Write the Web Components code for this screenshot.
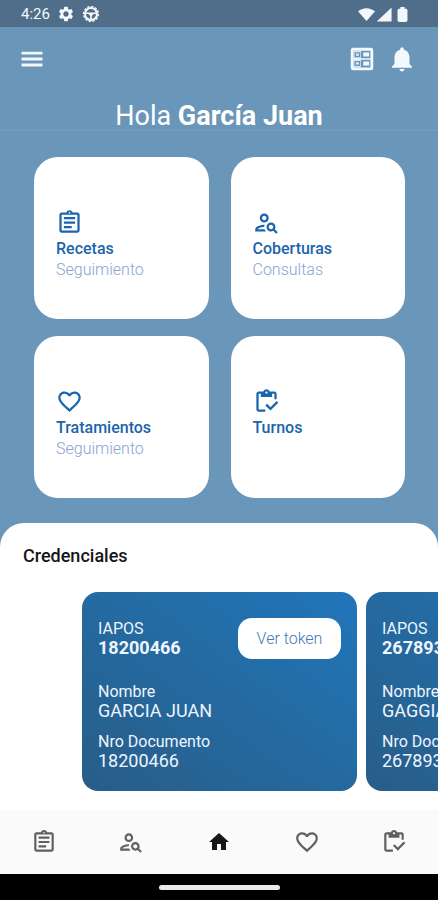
<!DOCTYPE html>
<html lang="es">
<head>
<meta charset="utf-8">
<meta name="viewport" content="width=device-width, initial-scale=1">
<title>Inicio</title>
<style>
html, body { margin: 0; min-height: 100%; }
body { font-family: Roboto, "Liberation Sans", sans-serif; background: #6a96b9; }
</style>
</head>
<body>
<health-app></health-app>
<script>
const ICONS = {
  menu: '<path d="M3 18.4h18v-2.5H3zm0-5.1h18v-2.5H3zM3 5.7v2.5h18V5.7z"/>',
  ballot: '<path fill-rule="evenodd" d="M5 3h14a2 2 0 0 1 2 2v14a2 2 0 0 1-2 2H5a2 2 0 0 1-2-2V5a2 2 0 0 1 2-2zm.3 2.3v13.4h13.4V5.3z"/><path opacity=".8" fill-rule="evenodd" d="M5.300 5.300H11.200v13.400H5.300zM6 6.500v4h4.600v-4zM6 13.500v4h4.600v-4z"/><path d="M7.300 7.600h2v1.800h-2zM7.300 14.600h2v1.800h-2zM5 11.400h14v1.200H5zM13 6.800h4.700v3.200H13zM13 14h4.700v3.200H13z"/>',
  bell: '<path d="M12 22c1.100 0 2-.9 2-2h-4c0 1.100.89 2 2 2zm6-6v-5c0-3.070-1.640-5.640-4.500-6.320V4c0-.83-.67-1.500-1.500-1.500s-1.500.67-1.500 1.500v.68C7.630 5.360 6 7.920 6 11v5l-2 2v1h16v-1z"/>',
  clipboard: '<path d="M7 15h7v2H7zm0-4h10v2H7zm0-4h10v2H7zm12-4h-4.180C14.400 1.840 13.300 1 12 1c-1.300 0-2.400.84-2.820 2H5c-1.100 0-2 .9-2 2v14c0 1.100.9 2 2 2h14c1.100 0 2-.9 2-2V5c0-1.100-.9-2-2-2zm-7-.25c.41 0 .75.34.75.75s-.34.75-.75.75-.75-.34-.75-.75.34-.75.75-.75zM19 19H5V5h14v14z"/>',
  search: '<path d="M10 12c2.210 0 4-1.790 4-4s-1.790-4-4-4-4 1.790-4 4 1.790 4 4 4zm0-6c1.100 0 2 .9 2 2s-.9 2-2 2-2-.9-2-2 .9-2 2-2zM4 18c.22-.72 3.310-2 6-2 0-.7.13-1.370.35-1.990C7.620 13.910 2 15.270 2 18v2h9.540c-.52-.58-.93-1.250-1.190-2H4zM19.430 18.020c.36-.59.57-1.280.57-2.020 0-2.210-1.790-4-4-4s-4 1.790-4 4 1.790 4 4 4c.74 0 1.430-.22 2.020-.57L20.590 22 22 20.590l-2.570-2.570zM16 18c-1.100 0-2-.9-2-2s.9-2 2-2 2 .9 2 2-.9 2-2 2z"/>',
  heart: '<path d="M16.500 3c-1.740 0-3.410.81-4.500 2.090C10.910 3.810 9.240 3 7.500 3 4.420 3 2 5.420 2 8.500c0 3.780 3.400 6.860 8.550 11.540L12 21.350l1.450-1.320C18.600 15.360 22 12.280 22 8.500 22 5.420 19.580 3 16.500 3zm-4.400 15.550l-.1.1-.1-.1C7.140 14.240 4 11.390 4 8.500 4 6.500 5.500 5 7.500 5c1.540 0 3.040.99 3.570 2.360h1.870C13.460 5.990 14.960 5 16.500 5c2 0 3.500 1.500 3.500 3.500 0 2.890-3.140 5.740-7.900 10.050z"/>',
  check: '<path d="M5 5h2v3h10V5h2v5h2V5c0-1.100-.9-2-2-2h-4.180C14.400 1.840 13.300 1 12 1s-2.400.84-2.820 2H5c-1.100 0-2 .9-2 2v14c0 1.100.9 2 2 2h6v-2H5zm7-2c.55 0 1 .45 1 1s-.45 1-1 1-1-.45-1-1 .45-1 1-1zM21 11.500 15.510 17l-3.010-3L11 15.500l4.510 4.500L22.500 13z"/>',
  home: '<path d="M10 20v-6h4v6h5v-8h3L12 3 2 12h3v8z"/>',
  gear: '<path d="M19.140 12.940c.04-.3.060-.61.060-.94 0-.32-.020-.64-.070-.94l2.030-1.580c.18-.14.23-.41.12-.61l-1.920-3.320c-.12-.22-.37-.29-.59-.22l-2.390.96c-.5-.38-1.030-.7-1.620-.94l-.36-2.540c-.04-.24-.24-.41-.48-.41h-3.840c-.24 0-.43.17-.47.41l-.36 2.540c-.59.24-1.130.57-1.620.94l-2.390-.96c-.22-.08-.47 0-.59.22L2.740 8.870c-.12.21-.08.47.12.61l2.030 1.580c-.05.3-.09.63-.09.94s.02.64.07.94l-2.030 1.580c-.18.14-.23.41-.12.61l1.920 3.320c.12.22.37.29.59.22l2.390-.96c.5.38 1.030.7 1.620.94l.36 2.540c.05.24.24.41.48.41h3.840c.24 0 .44-.17.47-.41l.36-2.540c.59-.24 1.130-.56 1.620-.94l2.390.96c.22.08.47 0 .59-.22l1.920-3.320c.12-.22.07-.47-.12-.61zM12 15.600c-1.980 0-3.600-1.620-3.600-3.600s1.620-3.600 3.600-3.600 3.600 1.620 3.600 3.600-1.620 3.600-3.600 3.600z"/>',
  wheel: '<g fill="none" stroke="currentColor"><circle cx="12" cy="12" r="8" stroke-width="2.600"/><circle cx="12" cy="12" r="9.800" stroke-width="2" stroke-dasharray="3.200 1.900"/><path stroke-width="2.200" d="M4 11h16M12 12v8M9 11l3 3 3-3"/></g>',
  wifi: '<path d="M12 21 0 7.500C3 4.800 7.300 3 12 3s9 1.800 12 4.500z"/>',
  signal: '<path d="M1 22h21V2z"/>',
  battery: '<path d="M16.500 4H15V1.500H9V4H7.500C6 4 5 5 5 6.300v13.900C5 21.500 6 22.500 7.500 22.500h9c1.500 0 2.500-1 2.500-2.300V6.300C19 5 18 4 16.500 4z"/>'
};

class Component extends HTMLElement {
  connectedCallback() {
    if (this.shadowRoot) return;
    this.attachShadow({ mode: "open" }).innerHTML =
      `<style>*{box-sizing:border-box}${this.css()}</style>${this.html()}`;
  }
}

customElements.define("app-icon", class extends Component {
  css() { return `:host{display:block;flex:none;width:var(--size,24px);height:var(--size,24px)}svg{display:block;width:100%;height:100%;fill:currentColor}`; }
  html() { return `<svg viewBox="0 0 24 24" aria-hidden="true">${ICONS[this.getAttribute("name")]}</svg>`; }
});

customElements.define("status-bar", class extends Component {
  css() { return `
    :host{display:flex;align-items:center;justify-content:space-between;height:27px;padding:1px 27px 0 21px;background:#506e89;color:#f4f8fc;font-size:15px;line-height:18px}
    .group{display:flex;align-items:center;gap:7px;--size:18px}
    .right{gap:1px;--size:17px}`; }
  html() { return `<div class="group"><time>4:26</time><app-icon name="gear"></app-icon><app-icon name="wheel"></app-icon></div>
    <div class="group right"><app-icon name="wifi"></app-icon><app-icon name="signal"></app-icon><app-icon name="battery"></app-icon></div>`; }
});

customElements.define("app-header", class extends Component {
  css() { return `
    :host{display:block;color:#fff}
    .bar{display:flex;align-items:center;height:62px;padding:1px 21px 0 18px;gap:10px}
    button{border:0;padding:0;background:none;color:#f2f8ff;font:inherit}
    .menu{margin-right:auto;--size:28px}
    .action{--size:30px}
    h1{margin:0;padding:11px 0 0;height:42px;border-bottom:1px solid #76a0c1;text-align:center;font-size:27px;line-height:32px;font-weight:400}
    b{font-weight:700}`; }
  html() { return `<div class="bar"><button class="menu" aria-label="Menú"><app-icon name="menu"></app-icon></button>
    <button class="action" aria-label="Formularios"><app-icon name="ballot"></app-icon></button>
    <button class="action" aria-label="Notificaciones"><app-icon name="bell"></app-icon></button></div>
    <h1><slot></slot></h1>`; }
});

customElements.define("menu-tile", class extends Component {
  css() { return `
    :host{display:block}
    a{display:flex;flex-direction:column;align-items:flex-start;height:162px;padding:52px 22px 0;border-radius:24px;background:#fff;color:#1a65ab;text-decoration:none;font-size:16px;line-height:21px}
    app-icon{--size:27px;margin-bottom:2px}
    strong{font-weight:500}
    span{color:#86a6d0;font-weight:300}`; }
  html() { return `<a href="#"><app-icon name="${this.getAttribute("icon")}"></app-icon><strong><slot></slot></strong><span><slot name="detail"></slot></span></a>`; }
});

customElements.define("credential-card", class extends Component {
  css() { return `
    :host{display:block;position:relative;flex:none;width:275px;height:199px;padding:27px 16px 0;border-radius:16px;background:linear-gradient(to top right,#285d87,#246ba3 55%,#2076ba);color:#eef5ff}
    dl{margin:0;display:grid;gap:12px;font-size:16px;line-height:19px}
    dl>div:first-child{margin-bottom:13px}
    dt{font-weight:400}
    dd{margin:0;font-size:18px}
    .number{font-weight:700}
    button{position:absolute;top:26px;right:16px;width:103px;height:41px;padding:0;border:0;border-radius:14px;background:#fff;color:#4478b4;font:300 16px/20px Roboto,sans-serif}`; }
  html() { return `<dl><div><dt>IAPOS</dt><dd class="number"><slot name="number"></slot></dd></div>
    <div><dt>Nombre</dt><dd><slot name="name"></slot></dd></div>
    <div><dt>Nro Documento</dt><dd><slot name="document"></slot></dd></div></dl>
    ${this.hasAttribute("token") ? "<button>Ver token</button>" : ""}`; }
});

customElements.define("credential-sheet", class extends Component {
  css() { return `
    :host{display:flex;flex-direction:column;padding-top:22px;border-radius:24px 24px 0 0;background:#fff;color:#161616}
    h2{margin:0 0 25px;padding:0 23px;font-size:18px;line-height:22px;font-weight:500}
    .track{display:flex;gap:9px;padding-left:82px;overflow:hidden}`; }
  html() { return `<h2>Credenciales</h2><div class="track"><slot></slot></div>`; }
});

customElements.define("bottom-nav", class extends Component {
  css() { return `
    :host{display:block;background:#fafafa;color:#606060}
    nav{display:grid;grid-template-columns:repeat(5,1fr);height:64px}
    a{display:grid;place-items:center;color:inherit;--size:26px}
    .active{color:#171717;--size:24px}`; }
  html() {
    const items = [["clipboard","Recetas"],["search","Coberturas"],["home","Inicio"],["heart","Tratamientos"],["check","Turnos"]];
    return `<nav>${items.map(([icon, label]) => `<a href="#" aria-label="${label}" class="${icon === "home" ? "active" : ""}"><app-icon name="${icon}"></app-icon></a>`).join("")}</nav>`;
  }
});

customElements.define("gesture-bar", class extends Component {
  css() { return `:host{display:flex;justify-content:center;align-items:center;height:26px;background:#000}i{width:121px;height:5px;border-radius:3px;background:#eee9ee}`; }
  html() { return `<i></i>`; }
});

customElements.define("health-app", class extends Component {
  css() { return `
    :host{display:flex;flex-direction:column;min-height:100vh;background:#6a96b9}
    main{flex:1;display:flex;flex-direction:column}
    .tiles{display:grid;grid-template-columns:1fr 1fr;gap:17px 22px;padding:26px 33px 25px 34px}
    credential-sheet{flex:1;padding-bottom:19px}`; }
  html() { return `<status-bar></status-bar>
    <app-header>Hola <b>García Juan</b></app-header>
    <main>
      <div class="tiles">
        <menu-tile icon="clipboard">Recetas<span slot="detail">Seguimiento</span></menu-tile>
        <menu-tile icon="search">Coberturas<span slot="detail">Consultas</span></menu-tile>
        <menu-tile icon="heart">Tratamientos<span slot="detail">Seguimiento</span></menu-tile>
        <menu-tile icon="check">Turnos</menu-tile>
      </div>
      <credential-sheet>
        <credential-card token><span slot="number">18200466</span><span slot="name">GARCIA JUAN</span><span slot="document">18200466</span></credential-card>
        <credential-card><span slot="number">267893</span><span slot="name">GAGGIA</span><span slot="document">267893</span></credential-card>
      </credential-sheet>
    </main>
    <bottom-nav></bottom-nav>
    <gesture-bar></gesture-bar>`; }
});
</script>
</body>
</html>
